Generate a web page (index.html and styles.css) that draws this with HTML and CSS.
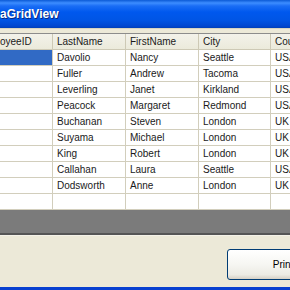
FILE: index.html
```html
<!DOCTYPE html>
<html>
<head>
<meta charset="utf-8">
<link rel="stylesheet" href="styles.css">
</head>
<body>
<div class="window">
  <div class="titlebar"><span class="title">aGridView</span></div>
  <div class="form">
    <div class="grid">
      <div class="row head">
        <div class="c c1">oyeeID</div>
        <div class="c c2">LastName</div>
        <div class="c c3">FirstName</div>
        <div class="c c4">City</div>
        <div class="c c5">Country</div>
      </div>
      <div class="row"><div class="c c1 sel"></div><div class="c c2">Davolio</div><div class="c c3">Nancy</div><div class="c c4">Seattle</div><div class="c c5">USA</div></div>
      <div class="row"><div class="c c1"></div><div class="c c2">Fuller</div><div class="c c3">Andrew</div><div class="c c4">Tacoma</div><div class="c c5">USA</div></div>
      <div class="row"><div class="c c1"></div><div class="c c2">Leverling</div><div class="c c3">Janet</div><div class="c c4">Kirkland</div><div class="c c5">USA</div></div>
      <div class="row"><div class="c c1"></div><div class="c c2">Peacock</div><div class="c c3">Margaret</div><div class="c c4">Redmond</div><div class="c c5">USA</div></div>
      <div class="row"><div class="c c1"></div><div class="c c2">Buchanan</div><div class="c c3">Steven</div><div class="c c4">London</div><div class="c c5">UK</div></div>
      <div class="row"><div class="c c1"></div><div class="c c2">Suyama</div><div class="c c3">Michael</div><div class="c c4">London</div><div class="c c5">UK</div></div>
      <div class="row"><div class="c c1"></div><div class="c c2">King</div><div class="c c3">Robert</div><div class="c c4">London</div><div class="c c5">UK</div></div>
      <div class="row"><div class="c c1"></div><div class="c c2">Callahan</div><div class="c c3">Laura</div><div class="c c4">Seattle</div><div class="c c5">USA</div></div>
      <div class="row"><div class="c c1"></div><div class="c c2">Dodsworth</div><div class="c c3">Anne</div><div class="c c4">London</div><div class="c c5">UK</div></div>
      <div class="row"><div class="c c1"></div><div class="c c2"></div><div class="c c3"></div><div class="c c4"></div><div class="c c5"></div></div>
      <div class="empty"></div>
    </div>
    <div class="panel">
      <button class="btn">Print</button>
    </div>
  </div>
  <div class="bottom"></div>
</div>
</body>
</html>
```
FILE: styles.css
```css
html, body {
  margin: 0;
  padding: 0;
  width: 290px;
  height: 290px;
  overflow: hidden;
  background: #ece9d8;
}
.window {
  width: 290px;
  height: 290px;
  display: flex;
  flex-direction: column;
  font-family: "Liberation Sans", Arial, sans-serif;
  font-size: 10px;
}
.titlebar {
  height: 28px;
  flex: none;
  background: linear-gradient(to bottom, #0b5ad6 0px, #3d8dff 3px, #1a6df5 6px, #0058ee 12px, #0055e5 20px, #0047d0 26px, #003fb8 28px);
  display: flex;
  align-items: center;
}
.title {
  color: #fff;
  font-family: "Liberation Sans", Arial, sans-serif;
  font-weight: bold;
  font-size: 12px;
  text-shadow: 1px 1px 0 #0a2a80;
  margin-top: -1px;
}
.form {
  flex: 1;
  display: flex;
  flex-direction: column;
  padding-top: 4px;
  border-top: 1px solid #d8d4c0;
}
.grid {
  border-top: 1px solid #8c8c8c;
  border-bottom: 2px solid #555555;
  background: #7b7b7b;
  display: flex;
  flex-direction: column;
}
.row {
  display: grid;
  grid-template-columns: 53px 73px 73px 72px 40px;
  height: 16px;
  background: #ffffff;
}
.c {
  border-right: 1px solid #d2cebc;
  border-bottom: 1px solid #d2cebc;
  padding-left: 4px;
  line-height: 15px;
  white-space: nowrap;
  overflow: hidden;
  color: #1a1a1a;
}
.c1 {
  padding-left: 0;
}
.sel {
  background: #316ac5;
}
.head .c {
  background: linear-gradient(to bottom, #f3f2ea, #ebeadb);
  border-bottom: 1px solid #cdc9b5;
  border-right: 1px solid #cdc9b5;
}
.empty {
  height: 23px;
  background: #7b7b7b;
}
.panel {
  flex: 1;
  background: #ece9d8;
  border-top: 1px solid #f4f2e8;
  padding-top: 13px;
  padding-left: 227px;
}
.btn {
  width: 112px;
  height: 31px;
  border: 1px solid #003c74;
  border-radius: 3px;
  background: linear-gradient(to bottom, #ffffff 0%, #f6f6f2 50%, #ecebe4 85%, #d6d0c5 100%);
  font-family: "Liberation Sans", Arial, sans-serif;
  font-size: 10px;
  color: #000;
  padding: 0;
  text-align: center;
}
.bottom {
  height: 3px;
  flex: none;
  background: #0840d0;
}
```
